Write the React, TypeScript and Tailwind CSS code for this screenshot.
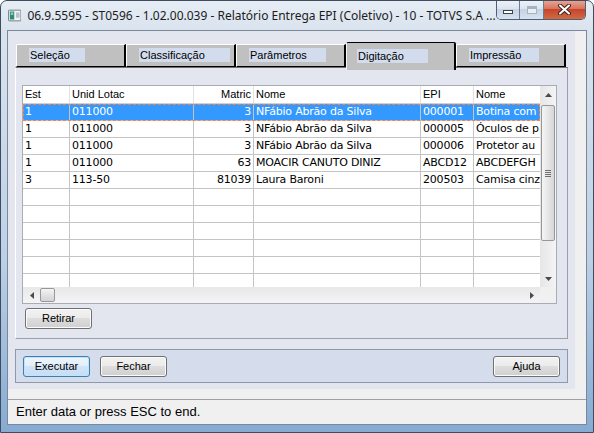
import React from 'react'

const rows = [
  { est: '1', lot: '011000', mat: '3', nome: 'NFábio Abrão da Silva', epi: '000001', desc: 'Botina com' },
  { est: '1', lot: '011000', mat: '3', nome: 'NFábio Abrão da Silva', epi: '000005', desc: 'Óculos de p' },
  { est: '1', lot: '011000', mat: '3', nome: 'NFábio Abrão da Silva', epi: '000006', desc: 'Protetor au' },
  { est: '1', lot: '011000', mat: '63', nome: 'MOACIR CANUTO DINIZ', epi: 'ABCD12', desc: 'ABCDEFGH' },
  { est: '3', lot: '113-50', mat: '81039', nome: 'Laura Baroni', epi: '200503', desc: 'Camisa cinz' },
]

const tabs = [
  { label: 'Seleção', box: 'w-[56px]' },
  { label: 'Classificação', box: 'w-[91px]' },
  { label: 'Parâmetros', box: 'w-[77px]' },
  { label: 'Digitação', box: 'w-[71px]', active: true },
  { label: 'Impressão', box: 'w-[70px]' },
]

const cell = 'shrink-0 h-full border-r border-[#c4c4c4] px-[2px] overflow-hidden whitespace-nowrap'

function Row({ r, selected }: { r?: (typeof rows)[number]; selected?: boolean }) {
  return (
    <div
      className={
        'flex h-[17px] shrink-0 border-b border-[#c4c4c4] leading-[16px] ' +
        (selected
          ? 'bg-[#3399ff] text-white outline-1 outline-dashed outline-[#f4804a] -outline-offset-1'
          : 'bg-white text-black')
      }
    >
      <div className={cell + ' w-[47px]'}>{r?.est}</div>
      <div className={cell + ' w-[124px]'}>{r?.lot}</div>
      <div className={cell + ' w-[60px] text-right'}>{r?.mat}</div>
      <div className={cell + ' w-[167px]'}>{r?.nome}</div>
      <div className={cell + ' w-[53px]'}>{r?.epi}</div>
      <div className="flex-1 h-full pl-[2px] overflow-hidden whitespace-nowrap">{r?.desc}</div>
    </div>
  )
}

function WinButton({ label, primary, className = '' }: { label: string; primary?: boolean; className?: string }) {
  return (
    <button
      className={
        'shrink-0 w-[67px] h-[21px] rounded-[3px] border text-[11px] text-black leading-[19px] ' +
        (primary
          ? 'border-[#3c7fb1] bg-[linear-gradient(180deg,#eef6fd_0%,#e0edf9_50%,#d0e4f6_50%,#c6ddf3_100%)] shadow-[inset_0_0_0_1px_#bfe3fb] '
          : 'border-[#707070] bg-[linear-gradient(180deg,#f2f2f2_0%,#ebebeb_50%,#dddddd_50%,#cfcfcf_100%)] shadow-[inset_0_0_0_1px_#fbfbfb] ') +
        className
      }
      style={{ fontFamily: '"Liberation Sans", Arial, sans-serif' }}
    >
      {label}
    </button>
  )
}

function Arrow({ dir }: { dir: 'up' | 'down' | 'left' | 'right' }) {
  const pts = {
    up: '0,4 3.5,0 7,4',
    down: '0,0 3.5,4 7,0',
    left: '4,0 0,3.5 4,7',
    right: '0,0 4,3.5 0,7',
  }[dir]
  const vert = dir === 'up' || dir === 'down'
  return (
    <svg width={vert ? 7 : 4} height={vert ? 4 : 7} viewBox={vert ? '0 0 7 4' : '0 0 4 7'}>
      <polygon points={pts} fill="#4a4a4a" />
    </svg>
  )
}

function TitleIcon() {
  return (
    <svg width="15" height="13" viewBox="0 0 15 13">
      <rect x="0.5" y="0.5" width="14" height="12" rx="1" fill="#f2f4f6" stroke="#6b7480" />
      <rect x="2" y="2" width="5" height="9" fill="#2e8c76" />
      <rect x="3" y="3" width="3" height="3" fill="#7fd0b8" />
      <rect x="9" y="3" width="4" height="6" fill="#b9c2cc" />
    </svg>
  )
}

export default function App() {
  return (
    <div
      className="w-[594px] h-[433px] flex flex-col border border-[#3f4c5f] rounded-t-[7px] overflow-hidden bg-[linear-gradient(180deg,#e6edf5_0%,#d9e3ee_7%,#bcd0e6_60%,#86abd2_100%)]"
      style={{ fontFamily: '"Liberation Sans", Arial, sans-serif' }}
    >
      {/* Title bar */}
      <div className="h-[29px] shrink-0 flex items-center pl-[7px]">
        <TitleIcon />
        <span
          className="ml-[6px] text-[12px] text-[#1c1c1c] whitespace-nowrap"
          style={{ fontFamily: '"Noto Sans", "Liberation Sans", sans-serif' }}
        >
          06.9.5595 - ST0596 - 1.02.00.039 - Relatório Entrega EPI (Coletivo) - 10 - TOTVS S.A ...
        </span>
        <div className="ml-auto mr-[7px] self-start -mt-[1px] flex h-[20px] rounded-b-[5px] border border-t-0 border-[#4e5e74] overflow-hidden">
          <div className="w-[26px] h-full flex items-end justify-center pb-[5px] border-r border-[#6b7b90] bg-[linear-gradient(180deg,#eef3f9_0%,#dce5f0_45%,#c6d3e3_50%,#d6e2ee_100%)]">
            <div className="w-[10px] h-[4px] bg-white border border-[#3a4350]" />
          </div>
          <div className="w-[27px] h-full flex items-center justify-center border-r border-[#6b7b90] bg-[linear-gradient(180deg,#eef3f9_0%,#dce5f0_45%,#c6d3e3_50%,#d6e2ee_100%)]">
            <div className="w-[10px] h-[8px] border border-[#a9b3bf] bg-[#e9eef4] shadow-[inset_0_2px_0_#a9b3bf]" />
          </div>
          <div className="w-[46px] h-full flex items-center justify-center bg-[linear-gradient(180deg,#e9a99a_0%,#d8755f_45%,#c7452c_50%,#d26a45_100%)]">
            <svg width="13" height="11" viewBox="0 0 13 11">
              <path d="M2 1.5 L11 9.5 M11 1.5 L2 9.5" stroke="#3b2520" strokeWidth="4" strokeLinecap="round" />
              <path d="M2 1.5 L11 9.5 M11 1.5 L2 9.5" stroke="#ffffff" strokeWidth="2" strokeLinecap="round" />
            </svg>
          </div>
        </div>
      </div>

      {/* Client area */}
      <div className="flex-1 mx-[6px] mb-[7px] flex flex-col border border-[#7b889a] bg-[#f0f0f0]">
        <div className="flex-1 flex">
          <div className="w-[567px] h-[358px] bg-[#e3e6ef] pl-[7px] pt-[11px] flex flex-col">
            {/* Tab control */}
            <div className="w-[553px] flex flex-col">
              <div className="h-[25px] flex items-end pl-[1px]">
                {tabs.map((t) =>
                  t.active ? (
                    <div
                      key={t.label}
                      className="relative z-10 w-[110px] h-[28px] -mb-[3px] rounded-t-[2px] bg-[#c0c0c0] border-t border-l border-r-2 border-t-[#000] border-l-[#f4f4f4] border-r-[#000] pl-[10px] pt-[6px]"
                    >
                      <div className={t.box + ' h-[14px] bg-[#d3dcec] pl-[1px] text-[11px] leading-[14px] text-black whitespace-nowrap'}>
                        {t.label}
                      </div>
                    </div>
                  ) : (
                    <div
                      key={t.label}
                      className="w-[110px] h-[23px] bg-[#c0c0c0] border-t border-l border-r-2 border-b border-t-[#ffffff] border-l-[#ffffff] border-r-[#000] border-b-[#000] pl-[12px] pt-[3px]"
                    >
                      <div className={t.box + ' h-[14px] bg-[#d3dcec] pl-[1px] text-[11px] leading-[14px] text-black whitespace-nowrap'}>
                        {t.label}
                      </div>
                    </div>
                  )
                )}
              </div>

              {/* Tab panel */}
              <div className="h-[272px] border border-t-[#6e6e6e] border-l-[#ffffff] border-r-[#9aa0aa] border-b-[#9aa0aa] pl-[6px] pt-[17px] flex flex-col items-start">
                {/* Grid */}
                <div className="w-[535px] h-[219px] shrink-0 border border-[#a7adb6] bg-white flex flex-col">
                  <div className="h-[201px] flex">
                    <div
                      className="w-[517px] h-full overflow-hidden flex flex-col text-[11px] tracking-[-0.2px]"
                      style={{ fontFamily: '"DejaVu Sans", Verdana, sans-serif' }}
                    >
                      <div
                        className="flex h-[18px] shrink-0 border-b border-[#d0d0d0] leading-[17px] text-black tracking-normal"
                        style={{ fontFamily: '"Liberation Sans", Arial, sans-serif' }}
                      >
                        <div className="shrink-0 w-[47px] border-r border-[#e2e2e2] px-[2px]">Est</div>
                        <div className="shrink-0 w-[124px] border-r border-[#e2e2e2] px-[2px]">Unid Lotac</div>
                        <div className="shrink-0 w-[60px] border-r border-[#e2e2e2] px-[2px] text-right">Matric</div>
                        <div className="shrink-0 w-[167px] border-r border-[#e2e2e2] px-[2px]">Nome</div>
                        <div className="shrink-0 w-[53px] border-r border-[#e2e2e2] px-[2px]">EPI</div>
                        <div className="flex-1 px-[2px]">Nome</div>
                      </div>
                      {rows.map((r, i) => (
                        <Row key={i} r={r} selected={i === 0} />
                      ))}
                      {Array.from({ length: 6 }).map((_, i) => (
                        <Row key={'e' + i} />
                      ))}
                    </div>
                    {/* Vertical scrollbar */}
                    <div className="w-[16px] h-full bg-[linear-gradient(90deg,#e6e6e6,#f4f4f4)] flex flex-col items-center">
                      <div className="h-[17px] flex items-center justify-center">
                        <Arrow dir="up" />
                      </div>
                      <div className="w-[14px] h-[136px] mt-[2px] rounded-[2px] border border-[#979797] bg-[linear-gradient(90deg,#f5f5f5,#e6e6e6_50%,#d6d6d6)] flex flex-col items-center justify-center gap-[1px]">
                        <div className="w-[6px] h-[1px] bg-[#6f6f6f]" />
                        <div className="w-[6px] h-[1px] bg-[#6f6f6f]" />
                        <div className="w-[6px] h-[1px] bg-[#6f6f6f]" />
                        <div className="w-[6px] h-[1px] bg-[#6f6f6f]" />
                      </div>
                      <div className="flex-1" />
                      <div className="h-[17px] flex items-center justify-center">
                        <Arrow dir="down" />
                      </div>
                    </div>
                  </div>
                  {/* Horizontal scrollbar */}
                  <div className="flex-1 flex">
                    <div className="w-[517px] h-full bg-[linear-gradient(180deg,#e8e8e8,#f4f4f4)] flex items-center">
                      <div className="w-[17px] flex justify-center">
                        <Arrow dir="left" />
                      </div>
                      <div className="w-[15px] h-[14px] rounded-[2px] border border-[#979797] bg-[linear-gradient(180deg,#f5f5f5,#e2e2e2_50%,#d4d4d4)]" />
                      <div className="flex-1" />
                      <div className="w-[17px] flex justify-center">
                        <Arrow dir="right" />
                      </div>
                    </div>
                    <div className="w-[16px] h-full bg-[#f0f0f0]" />
                  </div>
                </div>
                <WinButton label="Retirar" className="mt-[4px] ml-[3px]" />
              </div>
            </div>

            {/* Button panel */}
            <div className="mt-[10px] w-[553px] h-[34px] border border-[#8e99aa] bg-[#d5dcec] flex items-start pl-[7px] pt-[6px] pr-[7px] gap-[10px]">
              <WinButton label="Executar" primary />
              <WinButton label="Fechar" />
              <WinButton label="Ajuda" className="ml-auto" />
            </div>
          </div>
        </div>

        {/* Status bar */}
        <div className="h-[25px] shrink-0 border-t border-[#a0a0a0] bg-[#f0f0f0] flex items-center pl-[8px]">
          <span className="text-[13px] text-black">Enter data or press ESC to end.</span>
        </div>
      </div>
    </div>
  )
}
